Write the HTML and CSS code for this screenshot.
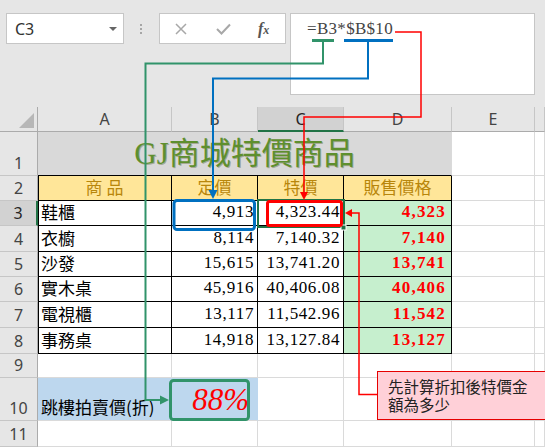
FILE: index.html
```html
<!DOCTYPE html>
<html lang="zh-Hant">
<head>
<meta charset="utf-8">
<title>GJ商城特價商品</title>
<link rel="stylesheet" href="styles.css">
</head>
<body>
<div class="page">
  <div class="toolbar">
    <div class="namebox"><span class="nb-text">C3</span><span class="nb-caret"></span></div>
    <div class="grip"><i></i><i></i><i></i></div>
    <div class="fxbox">
      <svg class="ico-x" width="12" height="12" viewBox="0 0 12 12"><path d="M1 1 L11 11 M11 1 L1 11" stroke="#a8a8a8" stroke-width="1.5" fill="none"/></svg>
      <svg class="ico-ok" width="15" height="12" viewBox="0 0 15 12"><path d="M1 6 L5.5 10.5 L14 1.5" stroke="#a8a8a8" stroke-width="2" fill="none"/></svg>
      <span class="fx">f<span class="fx-sub">x</span></span>
    </div>
    <div class="formula">=B3*$B$10</div>
  </div>

  <div class="sheet">
    <!-- header row -->
    <div class="corner"><span class="tri"></span></div>
    <div class="hd">A</div>
    <div class="hd">B</div>
    <div class="hd hd-sel">C</div>
    <div class="hd">D</div>
    <div class="hd">E</div>
    <div class="hd"></div>

    <!-- row 1 -->
    <div class="rh">1</div>
    <div class="title">GJ商城特價商品</div>
    <div class="c"></div>
    <div class="c"></div>

    <!-- row 2 -->
    <div class="rh">2</div>
    <div class="th first">商 品</div>
    <div class="th">定價</div>
    <div class="th">特價</div>
    <div class="th">販售價格</div>
    <div class="c"></div>
    <div class="c"></div>

    <!-- row 3 -->
    <div class="rh rh-sel">3</div>
    <div class="td first name">鞋櫃</div>
    <div class="td num">4,913</div>
    <div class="td num">4,323.44</div>
    <div class="td num sale">4,323</div>
    <div class="c"></div>
    <div class="c"></div>

    <!-- row 4 -->
    <div class="rh">4</div>
    <div class="td first name">衣櫥</div>
    <div class="td num">8,114</div>
    <div class="td num">7,140.32</div>
    <div class="td num sale">7,140</div>
    <div class="c"></div>
    <div class="c"></div>

    <!-- row 5 -->
    <div class="rh">5</div>
    <div class="td first name">沙發</div>
    <div class="td num">15,615</div>
    <div class="td num">13,741.20</div>
    <div class="td num sale">13,741</div>
    <div class="c"></div>
    <div class="c"></div>

    <!-- row 6 -->
    <div class="rh">6</div>
    <div class="td first name">實木桌</div>
    <div class="td num">45,916</div>
    <div class="td num">40,406.08</div>
    <div class="td num sale">40,406</div>
    <div class="c"></div>
    <div class="c"></div>

    <!-- row 7 -->
    <div class="rh">7</div>
    <div class="td first name">電視櫃</div>
    <div class="td num">13,117</div>
    <div class="td num">11,542.96</div>
    <div class="td num sale">11,542</div>
    <div class="c"></div>
    <div class="c"></div>

    <!-- row 8 -->
    <div class="rh">8</div>
    <div class="td first name">事務桌</div>
    <div class="td num">14,918</div>
    <div class="td num">13,127.84</div>
    <div class="td num sale">13,127</div>
    <div class="c"></div>
    <div class="c"></div>

    <!-- row 9 -->
    <div class="rh">9</div>
    <div class="c"></div>
    <div class="c"></div>
    <div class="c"></div>
    <div class="c"></div>
    <div class="c"></div>
    <div class="c"></div>

    <!-- row 10 -->
    <div class="rh">10</div>
    <div class="c blue label">跳樓拍賣價(折)</div>
    <div class="c blue pct">88%</div>
    <div class="c"></div>
    <div class="c"></div>
    <div class="c"></div>
    <div class="c"></div>

    <!-- row 11 -->
    <div class="rh">11</div>
    <div class="c"></div>
    <div class="c"></div>
    <div class="c"></div>
    <div class="c"></div>
    <div class="c"></div>
    <div class="c"></div>
  </div>

  <div class="callout"><div class="cl">先計算折扣後特價金</div><div class="cl">額為多少</div></div>

  <svg class="overlay" width="545" height="447" viewBox="0 0 545 447">
    <!-- active cell C3 -->
    <rect x="258" y="200" width="86" height="27" fill="none" stroke="#217346" stroke-width="2"/>
    <rect x="341" y="225" width="5" height="5" fill="#217346" stroke="#fff" stroke-width="1"/>

    <!-- green: B3 reference -> 88% cell -->
    <line x1="312" y1="40.5" x2="334" y2="40.5" stroke="#31936a" stroke-width="3"/>
    <path d="M323 42 V63.5 H145.5 V400 H161" fill="none" stroke="#31936a" stroke-width="2"/>
    <polygon points="160,395.5 169,400 160,404.5" fill="#31936a"/>
    <rect x="170.5" y="380.5" width="78" height="39" rx="3" fill="none" stroke="#31936a" stroke-width="3"/>

    <!-- blue: $B$10 -> B3 -->
    <line x1="344" y1="40.5" x2="393" y2="40.5" stroke="#0070c0" stroke-width="3"/>
    <path d="M368 42 V78.5 H213 V191" fill="none" stroke="#0070c0" stroke-width="2"/>
    <polygon points="208.5,190 217.5,190 213,199" fill="#0070c0"/>
    <rect x="174" y="200.5" width="80.5" height="29" rx="3" fill="none" stroke="#0070c0" stroke-width="3"/>

    <!-- red: formula -> C3 -->
    <path d="M395 32 H421 V117 H304 V193" fill="none" stroke="#ff0000" stroke-width="1.5"/>
    <polygon points="300,192 308,192 304,200" fill="#ff0000"/>
    <rect x="267.5" y="201.5" width="74" height="24" rx="2" fill="none" stroke="#ff0000" stroke-width="3"/>

    <!-- red: callout -> C3 -->
    <path d="M351 213 H359 V394.5 H377" fill="none" stroke="#ff0000" stroke-width="1.5"/>
    <polygon points="352,209 352,217 345,213" fill="#ff0000"/>
  </svg>
</div>
</body>
</html>
```

FILE: styles.css
```css
html, body {
  margin: 0;
  padding: 0;
  background: #ffffff;
}

body {
  width: 545px;
  height: 447px;
  overflow: hidden;
  font-family: "Noto Sans", "Noto Sans CJK TC", sans-serif;
}

.page {
  position: relative;
  width: 545px;
  height: 447px;
  overflow: hidden;
}

/* ---------- toolbar / formula bar ---------- */
.toolbar {
  height: 107px;
  box-sizing: border-box;
  background: #e6e6e6;
  display: flex;
  align-items: flex-start;
  padding: 13px 0 0 6px;
}

.namebox {
  width: 118px;
  height: 31px;
  box-sizing: border-box;
  background: #ffffff;
  border: 1px solid #c6c6c6;
  display: flex;
  align-items: center;
  justify-content: space-between;
  padding: 0 6px 0 8px;
}

.nb-text {
  font-family: "Noto Sans", sans-serif;
  font-size: 16px;
  color: #333333;
}

.nb-caret {
  width: 0;
  height: 0;
  border-left: 4px solid transparent;
  border-right: 4px solid transparent;
  border-top: 4px solid #666666;
}

.grip {
  width: 10px;
  height: 31px;
  margin: 0 13px 0 12px;
  display: flex;
  flex-direction: column;
  align-items: center;
  justify-content: center;
  gap: 2px;
}

.grip i {
  display: block;
  width: 2px;
  height: 2px;
  background: #a6a6a6;
}

.fxbox {
  width: 127px;
  height: 31px;
  box-sizing: border-box;
  background: #ffffff;
  border: 1px solid #c6c6c6;
  display: flex;
  align-items: center;
  padding-left: 15px;
}

.ico-x {
  display: block;
}

.ico-ok {
  display: block;
  margin-left: 29px;
}

.fx {
  margin-left: 27px;
  font-family: "Liberation Serif", serif;
  font-style: italic;
  font-weight: bold;
  font-size: 16px;
  color: #555555;
  line-height: 1;
}

.fx-sub {
  font-size: 12px;
}

.formula {
  width: 245px;
  height: 82px;
  margin-left: 4px;
  box-sizing: border-box;
  background: #ffffff;
  border: 1px solid #c6c6c6;
  padding: 5px 0 0 16px;
  font-family: "Liberation Serif", serif;
  font-size: 17px;
  line-height: 20px;
  letter-spacing: 0.3px;
  color: #444444;
}

/* ---------- sheet grid ---------- */
.sheet {
  display: grid;
  grid-template-columns: 38px 134px 86px 86px 108px 83px 10px;
  grid-template-rows: 25px 44px 25px 25px 26px 25px 25px 26px 26px 24px 43px 26px;
}

.sheet > div {
  box-sizing: border-box;
  border-right: 1px solid #dadada;
  border-bottom: 1px solid #dadada;
  display: flex;
  align-items: center;
  min-width: 0;
  white-space: nowrap;
  line-height: 20px;
}

.corner {
  background: #e6e6e6;
  border-right-color: #ababab !important;
  border-bottom-color: #ababab !important;
  justify-content: flex-end;
  align-items: flex-end !important;
  padding: 0 3px 3px 0;
}

.tri {
  width: 0;
  height: 0;
  border-left: 15px solid transparent;
  border-bottom: 15px solid #b7b7b7;
}

.hd {
  background: #e6e6e6;
  border-right-color: #c6c6c6 !important;
  border-bottom-color: #ababab !important;
  justify-content: center;
  font-family: "Noto Sans", sans-serif;
  font-size: 16px;
  color: #444444;
}

.hd-sel {
  background: #d2d2d2;
  border-bottom: 2px solid #217346 !important;
  color: #262626;
}

.rh {
  background: #e6e6e6;
  border-right-color: #ababab !important;
  border-bottom-color: #c6c6c6 !important;
  justify-content: center;
  align-items: flex-end !important;
  padding-bottom: 2px;
  font-family: "Noto Sans", sans-serif;
  font-size: 16px;
  color: #444444;
}

.rh-sel {
  background: #d2d2d2;
  border-right: 2px solid #217346 !important;
  color: #262626;
}

.title {
  grid-column: span 4;
  background: #d9d9d9;
  border-bottom-color: #000000 !important;
  justify-content: center;
  align-items: flex-end !important;
  padding-bottom: 4px;
  font-family: "Liberation Serif", "Noto Sans CJK TC", serif;
  font-size: 31px;
  line-height: 34px !important;
  color: #5e8f2e;
  text-shadow: 1px 1px 0 rgba(70, 80, 20, 0.35);
}

.th {
  background: #ffe699;
  border-right-color: #000000 !important;
  border-bottom-color: #000000 !important;
  justify-content: center;
  font-family: "Noto Sans CJK TC", sans-serif;
  font-size: 17px;
  color: #b8860b;
  padding-bottom: 2px;
}

.td {
  border-right-color: #000000 !important;
  border-bottom-color: #000000 !important;
  font-size: 17px;
  color: #000000;
  padding-bottom: 2px;
}

.first {
  box-shadow: inset 1px 0 0 #000000;
}

.name {
  font-family: "Noto Sans CJK TC", sans-serif;
  padding-left: 3px;
}

.num {
  justify-content: flex-end;
  font-family: "Liberation Serif", serif;
  letter-spacing: 0.6px;
  padding-right: 3px;
}

.sale {
  background: #c6efce;
  color: #ff0000;
  font-weight: bold;
  letter-spacing: 1.2px;
  padding-right: 5px;
}

.blue {
  background: #bdd7ee;
  border-right-color: #bdd7ee !important;
}

.label {
  align-items: flex-end !important;
  padding: 0 0 3px 3px;
  font-family: "Noto Sans CJK TC", sans-serif;
  font-size: 17px;
  color: #000000;
}

.pct {
  justify-content: flex-end;
  align-items: flex-end !important;
  padding: 0 8px 3px 0;
  font-family: "Liberation Serif", serif;
  font-style: italic;
  font-size: 31px;
  line-height: 34px !important;
  color: #ff0000;
}

/* ---------- overlays ---------- */
.callout {
  position: absolute;
  left: 377px;
  top: 371px;
  width: 175px;
  height: 49px;
  box-sizing: border-box;
  background: #ffd0d8;
  border: 1px solid #e60000;
  padding: 5px 0 0 10px;
  display: flex;
  flex-direction: column;
  font-family: "Noto Sans CJK TC", sans-serif;
  font-size: 15.5px;
  line-height: 18px;
  color: #222222;
}

.cl {
  height: 18px;
  white-space: nowrap;
}

.overlay {
  position: absolute;
  left: 0;
  top: 0;
  pointer-events: none;
}
```
